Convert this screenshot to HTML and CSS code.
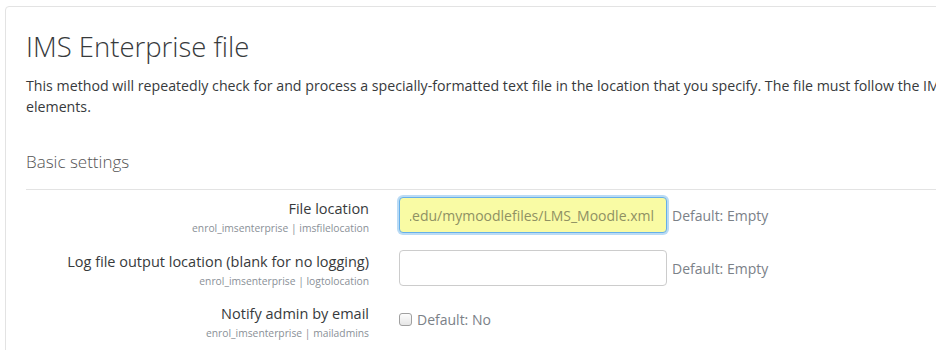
FILE: index.html
```html
<!DOCTYPE html>
<html lang="en">
  <head>
    <meta charset="UTF-8" />
    <meta name="viewport" content="width=device-width, initial-scale=1.0" />
    <title>IMS Enterprise file</title>
    <link rel="stylesheet" href="styles.css">
  </head>
  <body>
    <div class="card">
      <h2 class="title">IMS Enterprise file</h2>
      <p class="intro">
        <span class="line">This method will repeatedly check for and process a specially-formatted text file in the location that you specify. The file must follow the IMS Enterprise specification containing person, group, and membership XML</span><br />
        elements.
      </p>

      <h3 class="section">Basic settings</h3>

      <div class="setting">
        <div class="label">
          <span class="name">File location</span>
          <span class="key">enrol_imsenterprise | imsfilelocation</span>
        </div>
        <div class="field">
          <div class="input focused">
            <div class="input-text"><span>/var/moodledata/school.edu/mymoodlefiles/LMS_Moodle.xml</span></div>
          </div>
          <span class="default">Default: Empty</span>
        </div>
      </div>

      <div class="setting">
        <div class="label">
          <span class="name">Log file output location (blank for no logging)</span>
          <span class="key">enrol_imsenterprise | logtolocation</span>
        </div>
        <div class="field">
          <div class="input"></div>
          <span class="default">Default: Empty</span>
        </div>
      </div>

      <div class="setting setting-check">
        <div class="label">
          <span class="name">Notify admin by email</span>
          <span class="key">enrol_imsenterprise | mailadmins</span>
        </div>
        <div class="field check-field">
          <span class="checkbox"></span>
          <span class="default">Default: No</span>
        </div>
      </div>
    </div>
  </body>
</html>
```

FILE: styles.css
```css
* {
  margin: 0;
  padding: 0;
  box-sizing: border-box;
}

body {
  width: 100%;
  height: 100vh;
  overflow: hidden;
  background-color: #fff;
  padding: 6px 0 0 5px;
  font-family: 'Open Sans', 'Noto Sans', sans-serif;
  color: #373a3c;
}

.card {
  width: 1100px;
  border: 1px solid #e3e3e3;
  border-radius: 4px;
  padding: 20px 20px 0 20px;
  height: 400px;
}

.title {
  font-size: 27.5px;
  font-weight: 300;
  line-height: 40px;
  color: #373a3c;
}

.intro {
  margin-top: 8px;
  font-size: 14.2px;
  line-height: 21px;
  color: #373a3c;
}

.line {
  white-space: nowrap;
}

.section {
  margin-top: 32px;
  font-size: 17px;
  font-weight: 300;
  line-height: 26px;
  color: #555;
  padding-bottom: 14px;
  border-bottom: 1px solid #e3e3e3;
}

.setting {
  display: grid;
  grid-template-columns: 343px 1fr;
  column-gap: 30px;
  margin-top: 7px;
}

.setting + .setting {
  margin-top: 15px;
}

.setting + .setting-check {
  margin-top: 14px;
}

.label {
  display: flex;
  flex-direction: column;
  align-items: flex-end;
  text-align: right;
}

.name {
  font-size: 14.5px;
  line-height: 20px;
  color: #373a3c;
  margin-top: 2px;
}

.key {
  font-size: 10.3px;
  line-height: 14px;
  color: #8a9097;
  margin-top: 2px;
}

.field {
  display: flex;
  align-items: center;
  gap: 5px;
  height: 36px;
}

.input {
  width: 268px;
  height: 36px;
  border: 1px solid #ccc;
  border-radius: 4px;
  background-color: #fff;
  padding: 0 12px 0 10px;
  display: flex;
  align-items: center;
}

.input.focused {
  background-color: #f9fba4;
  border-color: #66afe9;
  box-shadow: 0 0 0 2px rgba(102, 175, 233, 0.45);
}

.input-text {
  width: 100%;
  overflow: hidden;
  display: flex;
  justify-content: flex-end;
  white-space: nowrap;
  font-size: 14px;
  color: #8f9163;
}

.default {
  font-size: 14px;
  color: #7b8188;
}

.check-field {
  align-items: flex-start;
  height: auto;
  padding-top: 8px;
}

.checkbox {
  width: 13px;
  height: 13px;
  border: 1px solid #a0a0a0;
  border-radius: 3px;
  background: linear-gradient(#fcfcfc, #e6e6e6);
  margin-top: 3px;
}
```
